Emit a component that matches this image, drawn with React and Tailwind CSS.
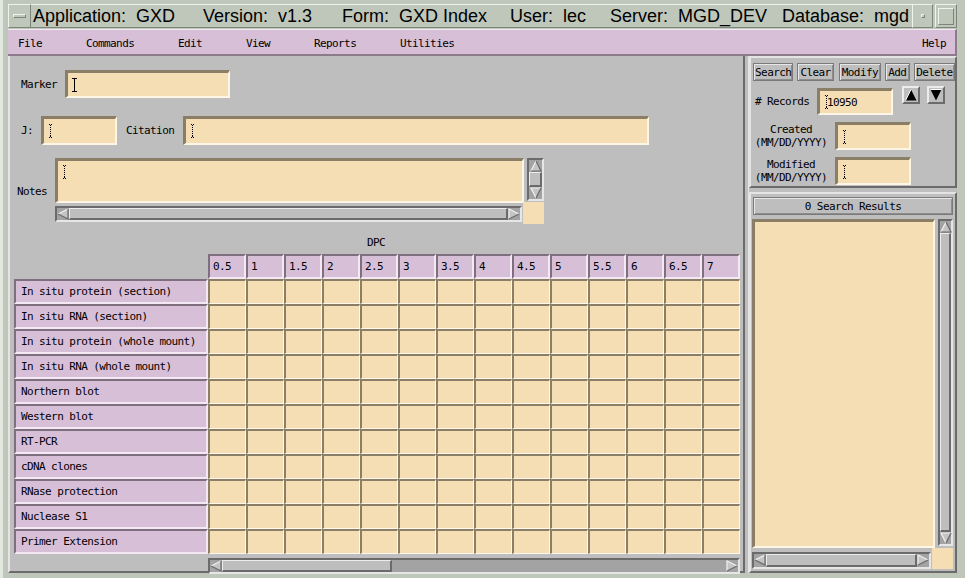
import React from "react";

const MONO = "font-['DejaVu_Sans_Mono','Liberation_Mono',monospace] text-[11px] tracking-[-0.6px] leading-none text-black";
const FIELD = "bg-[#f5deb3] border-t-[3px] border-l-[3px] border-b-2 border-r-2 border-t-[#8b7e66] border-l-[#8b7e66] border-b-[#fdf5e6] border-r-[#fdf5e6] flex items-center pl-[3px]";
const SLIDER = "bg-[#bebebe] border-t border-l border-t-[#ececec] border-l-[#ececec] border-b-2 border-r-2 border-b-[#6b6b6b] border-r-[#6b6b6b]";
const TROUGH = "bg-[#a3a3a3] border-t-2 border-l-2 border-t-[#6b6b6b] border-l-[#6b6b6b] border-b-2 border-r-2 border-b-[#e6e6e6] border-r-[#e6e6e6]";
const BTN = "bg-[#bebebe] border border-[#7a7a7a] shadow-[inset_1px_1px_0_#e6e6e6,inset_-1px_-1px_0_#8e8e8e] flex items-center justify-center h-[18px]";
const LABEL_CELL = "bg-[#d8bfd8] border-t-2 border-l-2 border-t-[#7e6e7e] border-l-[#7e6e7e] border-b-2 border-r-2 border-b-[#f3e8f3] border-r-[#f3e8f3] flex items-center";
const GRID_CELL = "w-[38px] h-[25px] bg-[#f5deb3] border-t-2 border-l-2 border-t-[#8b7e66] border-l-[#8b7e66] border-b border-r border-b-[#fff8ec] border-r-[#fff8ec]";

function IBeam({ dotted = false }) {
  if (dotted) {
    return (
      <svg width="7" height="14" viewBox="0 0 7 14" className="shrink-0 block">
        <g fill="#000">
          <rect x="2" y="0" width="1" height="1" />
          <rect x="4" y="0" width="1" height="1" />
          <rect x="3" y="1" width="1" height="1" />
          {[3, 5, 7, 9, 11].map((y) => (
            <rect key={y} x="3" y={y} width="1" height="1" />
          ))}
          <rect x="3" y="12" width="1" height="1" />
          <rect x="2" y="13" width="1" height="1" />
          <rect x="4" y="13" width="1" height="1" />
        </g>
      </svg>
    );
  }
  return (
    <svg width="7" height="14" viewBox="0 0 7 14" className="shrink-0 block">
      <path d="M1 0.5H6M3.5 0.5V13.5M1 13.5H6" stroke="#000" fill="none" />
    </svg>
  );
}

function Arrow({ dir }) {
  let pts, light, dark;
  if (dir === "left") {
    pts = "1,6 11,1 11,11";
    light = "M1 6L11 1";
    dark = "M11 1L11 11L1 6";
  } else if (dir === "right") {
    pts = "11,6 1,1 1,11";
    light = "M1 11L1 1L11 6";
    dark = "M11 6L1 11";
  } else if (dir === "up") {
    pts = "6,1 1,11 11,11";
    light = "M1 11L6 1";
    dark = "M6 1L11 11L1 11";
  } else {
    pts = "6,11 1,1 11,1";
    light = "M11 1L1 1L6 11";
    dark = "M6 11L11 1";
  }
  return (
    <svg width="12" height="12" viewBox="0 0 12 12" className="shrink-0 block">
      <polygon points={pts} fill="#c4c4c4" />
      <path d={light} stroke="#f0f0f0" strokeWidth="1.2" fill="none" />
      <path d={dark} stroke="#6b6b6b" strokeWidth="1.2" fill="none" />
    </svg>
  );
}

function HScroll({ className, slider }) {
  return (
    <div className={"flex " + TROUGH + " " + className}>
      <Arrow dir="left" />
      {slider ? <div className={"h-full " + SLIDER + " " + slider} /> : <div className={"h-full flex-1 " + SLIDER} />}
      {slider ? <div className="flex-1" /> : null}
      <Arrow dir="right" />
    </div>
  );
}

function VScroll({ className }) {
  return (
    <div className={"flex flex-col items-center " + TROUGH + " " + className}>
      <Arrow dir="up" />
      <div className={"w-full flex-1 " + SLIDER} />
      <Arrow dir="down" />
    </div>
  );
}

function Cell() {
  return <div className={GRID_CELL} />;
}

const COLS = ["0.5", "1", "1.5", "2", "2.5", "3", "3.5", "4", "4.5", "5", "5.5", "6", "6.5", "7"];
const ROWS = [
  "In situ protein (section)",
  "In situ RNA (section)",
  "In situ protein (whole mount)",
  "In situ RNA (whole mount)",
  "Northern blot",
  "Western blot",
  "RT-PCR",
  "cDNA clones",
  "RNase protection",
  "Nuclease S1",
  "Primer Extension",
];

const FRAME_BOX = "border border-t-[#eef2ec] border-l-[#eef2ec] border-b-[#7d857b] border-r-[#7d857b]";

function TitleBar() {
  return (
    <div className="h-[25px] flex shrink-0">
      <div className={"w-[23px] h-[24px] flex items-center justify-center " + FRAME_BOX}>
        <div className={"w-[13px] h-[4px] " + FRAME_BOX} />
      </div>
      <div className="flex-1 h-[24px] flex items-center pl-[2px] border-t border-t-[#eef2ec] border-b border-b-[#7d857b] font-['Liberation_Sans',Arial,sans-serif] text-[18px] leading-none text-black whitespace-pre">
        <span className="w-[170px] shrink-0">Application:  GXD</span>
        <span className="w-[139px] shrink-0">Version:  v1.3</span>
        <span className="w-[168px] shrink-0">Form:  GXD Index</span>
        <span className="w-[100px] shrink-0">User:  lec</span>
        <span className="w-[172px] shrink-0">Server:  MGD_DEV</span>
        <span className="shrink-0">Database:  mgd</span>
      </div>
      <div className={"w-[21px] h-[24px] flex items-center justify-center " + FRAME_BOX}>
        <div className={"w-[4px] h-[4px] " + FRAME_BOX} />
      </div>
      <div className="w-[2px]" />
      <div className={"w-[22px] h-[24px] flex items-center justify-center " + FRAME_BOX}>
        <div className={"w-[16px] h-[17px] " + FRAME_BOX} />
      </div>
    </div>
  );
}

function MenuBar() {
  return (
    <div className={"h-[27px] shrink-0 bg-[#d8bfd8] border-t border-t-[#f3e8f3] border-b-2 border-b-[#8b7b8b] border-r-2 border-r-[#8b7b8b] flex items-center pt-[2px] pl-[10px] pr-[9px] " + MONO}>
      <span className="w-[68px]">File</span>
      <span className="w-[92px]">Commands</span>
      <span className="w-[68px]">Edit</span>
      <span className="w-[68px]">View</span>
      <span className="w-[86px]">Reports</span>
      <span>Utilities</span>
      <span className="ml-auto">Help</span>
    </div>
  );
}

function LeftPanel() {
  return (
    <div className={"w-[737px] h-full flex flex-col bg-[#bebebe] border-l-2 border-l-[#e4e4e4] border-r-2 border-r-[#6b6b6b] border-b-2 border-b-[#6b6b6b] " + MONO}>
      {/* Marker */}
      <div className="flex items-center mt-[14px]">
        <div className="w-[55px] pl-[11px]">Marker</div>
        <div className={FIELD + " w-[165px] h-[28px]"}>
          <IBeam />
        </div>
      </div>
      {/* J / Citation */}
      <div className="flex items-center mt-[18px]">
        <div className="w-[31px] pl-[11px]">J:</div>
        <div className={FIELD + " w-[76px] h-[29px]"}>
          <IBeam dotted />
        </div>
        <div className="w-[66px] pl-[9px]">Citation</div>
        <div className={FIELD + " w-[466px] h-[29px]"}>
          <IBeam dotted />
        </div>
      </div>
      {/* Notes */}
      <div className="flex items-center mt-[13px]">
        <div className="w-[45px] pl-[7px]">Notes</div>
        <div className="flex">
          <div className="flex flex-col w-[468px]">
            <div className={"h-[45px] w-[469px] items-start pt-[4px] " + FIELD}>
              <IBeam dotted />
            </div>
            <HScroll className="w-[467px] h-[16px] mt-[3px]" />
          </div>
          <div className="flex flex-col w-[21px]">
            <VScroll className="ml-[4px] w-[17px] h-[43px]" />
            <div className="h-[22px] w-[21px] bg-[#f5deb3] mt-[1px]" />
          </div>
        </div>
      </div>
      {/* DPC */}
      <div className="mt-[13px] h-[12px] pl-[357px] flex items-center">DPC</div>
      {/* header */}
      <div className="flex mt-[6px] pl-[198px]">
        {COLS.map((c) => (
          <div key={c} className={LABEL_CELL + " w-[38px] h-[25px] pl-[3px]"}>
            {c}
          </div>
        ))}
      </div>
      {/* rows */}
      {ROWS.map((r) => (
        <div key={r} className="flex ml-[4px]">
          <div className={LABEL_CELL + " w-[194px] h-[25px] pl-[5px]"}>{r}</div>
          {COLS.map((c) => (
            <Cell key={c} />
          ))}
        </div>
      ))}
      <HScroll className="ml-[198px] mt-[4px] w-[532px] h-[16px] bg-[#a0a0a0]" slider="w-[170px]" />
    </div>
  );
}

function ArrowBtn({ up }) {
  return (
    <div className="w-[18px] h-[18px] bg-[#bebebe] border-t-2 border-l-2 border-t-[#ececec] border-l-[#ececec] border-b-2 border-r-2 border-b-[#6b6b6b] border-r-[#6b6b6b] flex items-center justify-center">
      <svg width="12" height="12" viewBox="0 0 12 12" className="block">
        {up ? (
          <>
            <polygon points="6,0.5 0.5,11.5 11.5,11.5" fill="#000" />
            <path d="M6 0.5L0.5 11.5" stroke="#ffffff" strokeWidth="1" />
          </>
        ) : (
          <>
            <polygon points="6,11.5 0.5,0.5 11.5,0.5" fill="#000" />
            <path d="M0.5 0.5H11.5" stroke="#ffffff" strokeWidth="1" />
          </>
        )}
      </svg>
    </div>
  );
}

function RightPanel() {
  const SECTION = "bg-[#bebebe] border-t-2 border-l-2 border-t-[#e4e4e4] border-l-[#e4e4e4] border-b-2 border-r-2 border-b-[#6b6b6b] border-r-[#6b6b6b] flex flex-col";
  return (
    <div className={"w-[208px] h-full flex flex-col " + MONO}>
      <div className={SECTION + " h-[132px]"}>
        <div className="flex mt-[5px] ml-[2px]">
          <div className={BTN + " w-[41px]"}>Search</div>
          <div className={BTN + " w-[37px] ml-[4px]"}>Clear</div>
          <div className={BTN + " w-[43px] ml-[5px]"}>Modify</div>
          <div className={BTN + " w-[25px] ml-[4px]"}>Add</div>
          <div className={BTN + " w-[42px] ml-[4px]"}>Delete</div>
        </div>
        <div className="flex items-start mt-[7px]">
          <div className="w-[66px] h-[27px] pl-[4px] flex items-center">
            <span># Records</span>
          </div>
          <div className={FIELD + " w-[76px] h-[27px] pl-[2px]"}>
            <IBeam dotted />
            <span className="-ml-[3px]">10950</span>
          </div>
          <div className="ml-[9px] -mt-[2px]">
            <ArrowBtn up />
          </div>
          <div className="ml-[7px] -mt-[2px]">
            <ArrowBtn />
          </div>
        </div>
        <div className="flex items-center mt-[7px]">
          <div className="w-[80px] flex flex-col items-center gap-[3px] leading-[10px]">
            <span>Created</span>
            <span>(MM/DD/YYYY)</span>
          </div>
          <div className={FIELD + " w-[76px] h-[28px] ml-[4px]"}>
            <IBeam dotted />
          </div>
        </div>
        <div className="flex items-center mt-[7px]">
          <div className="w-[80px] flex flex-col items-center gap-[3px] leading-[10px]">
            <span>Modified</span>
            <span>(MM/DD/YYYY)</span>
          </div>
          <div className={FIELD + " w-[76px] h-[28px] ml-[4px]"}>
            <IBeam dotted />
          </div>
        </div>
      </div>
      <div className="h-[4px] bg-[#bebebe]" />
      <div className={SECTION + " h-[381px]"}>
        <div className={BTN + " w-[200px] ml-[2px] mt-[3px]"}>0 Search Results</div>
        <div className="flex mt-[4px] ml-[1px]">
          <div className="flex flex-col w-[183px]">
            <div className="h-[329px] w-[183px] bg-[#f5deb3] border-t-[3px] border-l-[3px] border-t-[#8b7e66] border-l-[#8b7e66] border-b-2 border-r-2 border-b-[#fdf5e6] border-r-[#fdf5e6]" />
            <HScroll className="w-[179px] h-[17px] mt-[4px]" />
          </div>
          <div className="flex flex-col w-[18px]">
            <VScroll className="ml-[3px] w-[15px] h-[327px]" />
            <div className="h-[21px] w-[21px] -ml-[3px] mt-[2px] bg-[#f5deb3]" />
          </div>
        </div>
      </div>
    </div>
  );
}

export default function App() {
  return (
    <div className="w-[965px] h-[578px] overflow-hidden bg-[#bfc7bb] flex flex-col pl-[5px] pr-[8px] pt-[4px] pb-[5px] border-l-[3px] border-l-[#e2e8df]">
      <TitleBar />
      <MenuBar />
      <div className="flex h-[517px] shrink-0">
        <LeftPanel />
        <div className="w-[4px] h-full bg-[#bebebe] border-r border-r-[#e4e4e4]" />
        <RightPanel />
      </div>
    </div>
  );
}
